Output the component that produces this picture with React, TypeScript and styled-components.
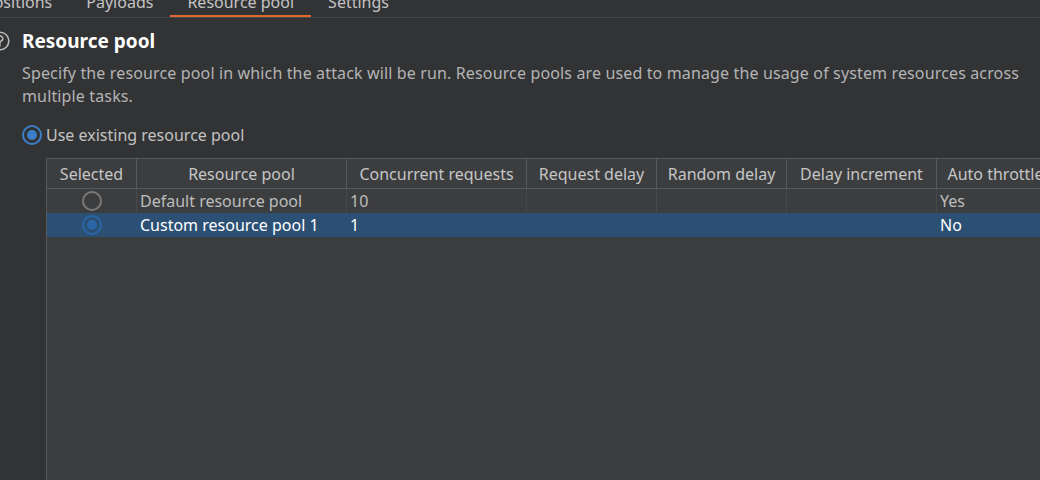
import React from "react";
import styled, { createGlobalStyle } from "styled-components";

const GlobalStyle = createGlobalStyle`
  html, body {
    margin: 0;
    padding: 0;
    background: #323335;
    overflow: hidden;
  }
  body {
    font-family: "Noto Sans", "Open Sans", Arial, sans-serif;
    color: #bdbdbd;
  }
`;

const Page = styled.div`
  width: 1040px;
  height: 480px;
  overflow: hidden;
  display: flex;
  flex-direction: column;
`;

const TabBar = styled.div`
  display: flex;
  height: 29px;
  margin-top: -12px;
  margin-left: -33px;
  border-bottom: 1px solid #47484a;
  flex-shrink: 0;
`;

const Tab = styled.div<{ $active?: boolean }>`
  display: flex;
  align-items: center;
  padding: 0 17px;
  font-size: 16px;
  color: #c4c4c4;
  border-bottom: 2px solid ${(p) => (p.$active ? "#e2672f" : "transparent")};
  white-space: nowrap;
`;

const Content = styled.div`
  display: flex;
  flex-direction: column;
  flex: 1;
  min-height: 0;
  padding: 9px 0 0 22px;
`;

const HeadingRow = styled.div`
  display: flex;
  align-items: center;
  height: 28px;
  position: relative;
`;

const HelpIcon = styled.svg`
  position: absolute;
  left: -32px;
  top: 4px;
`;

const Heading = styled.h1`
  margin: 0;
  font-size: 19px;
  font-weight: 700;
  color: #ffffff;
  line-height: 28px;
`;

const Description = styled.p`
  margin: 7px 0 0;
  font-size: 16px;
  line-height: 23px;
  letter-spacing: 0.14px;
  color: #b4b4b4;
  padding-right: 12px;
`;

const RadioRow = styled.label`
  display: flex;
  align-items: center;
  gap: 4px;
  height: 24px;
  margin-top: 15px;
  font-size: 16px;
  color: #c2c2c2;
`;

const Radio = styled.span<{ $checked?: boolean; $onSelection?: boolean }>`
  box-sizing: border-box;
  width: 20px;
  height: 20px;
  border-radius: 50%;
  border: 2px solid
    ${(p) => (p.$checked ? (p.$onSelection ? "#2a66a6" : "#3b7fc9") : "#7a7a7a")};
  display: inline-flex;
  align-items: center;
  justify-content: center;
  flex-shrink: 0;
  &::after {
    content: "";
    width: 10px;
    height: 10px;
    border-radius: 50%;
    background: ${(p) => (p.$onSelection ? "#2a66a6" : "#3b7fc9")};
    display: ${(p) => (p.$checked ? "block" : "none")};
  }
`;

const Table = styled.div`
  margin-top: 11px;
  margin-left: 24px;
  flex: 1;
  background: #3c3d3f;
  border-top: 1px solid #58595b;
  border-left: 1px solid #58595b;
  display: flex;
  flex-direction: column;
`;

const columns = "90px 210px 180px 130px 130px 150px 118px";

const HeaderRow = styled.div`
  display: grid;
  grid-template-columns: ${columns};
  height: 29px;
  border-bottom: 1px solid #58595b;
`;

const HeaderCell = styled.div`
  box-sizing: border-box;
  border-right: 1px solid #58595b;
  display: flex;
  align-items: center;
  justify-content: center;
  font-size: 16px;
  color: #c6c6c6;
  white-space: nowrap;
`;

const Row = styled.div<{ $selected?: boolean }>`
  display: grid;
  grid-template-columns: ${columns};
  height: 24px;
  background: ${(p) => (p.$selected ? "#2c5074" : "transparent")};
  color: ${(p) => (p.$selected ? "#ffffff" : "#bdbdbd")};
`;

const Cell = styled.div<{ $center?: boolean; $selected?: boolean }>`
  box-sizing: border-box;
  border-right: 1px solid ${(p) => (p.$selected ? "transparent" : "#47484a")};
  display: flex;
  align-items: center;
  justify-content: ${(p) => (p.$center ? "center" : "flex-start")};
  padding-left: ${(p) => (p.$center ? "0" : "3px")};
  font-size: 16px;
  white-space: nowrap;
`;

const headers = [
  "Selected",
  "Resource pool",
  "Concurrent requests",
  "Request delay",
  "Random delay",
  "Delay increment",
  "Auto throttle",
];

const pools = [
  { name: "Default resource pool", concurrent: "10", auto: "Yes", selected: false },
  { name: "Custom resource pool 1", concurrent: "1", auto: "No", selected: true },
];

export default function App() {
  return (
    <Page>
      <GlobalStyle />
      <TabBar>
        <Tab>Positions</Tab>
        <Tab>Payloads</Tab>
        <Tab $active>Resource pool</Tab>
        <Tab>Settings</Tab>
      </TabBar>
      <Content>
        <HeadingRow>
          <HelpIcon width="20" height="20" viewBox="0 0 20 20">
            <circle cx="10" cy="10" r="8.8" fill="none" stroke="#b8b8b8" strokeWidth="1.6" />
            <path
              d="M7.3 7.6a2.7 2.7 0 1 1 3.8 2.5c-.8.4-1.1.9-1.1 1.7v.6"
              fill="none"
              stroke="#b8b8b8"
              strokeWidth="1.6"
              strokeLinecap="round"
            />
            <circle cx="10" cy="14.6" r="1" fill="#b8b8b8" />
          </HelpIcon>
          <Heading>Resource pool</Heading>
        </HeadingRow>
        <Description>
          Specify the resource pool in which the attack will be run. Resource pools are used to
          manage the usage of system resources across multiple tasks.
        </Description>
        <RadioRow>
          <Radio $checked />
          Use existing resource pool
        </RadioRow>
        <Table>
          <HeaderRow>
            {headers.map((h) => (
              <HeaderCell key={h}>{h}</HeaderCell>
            ))}
          </HeaderRow>
          {pools.map((p) => (
            <Row key={p.name} $selected={p.selected}>
              <Cell $center $selected={p.selected}>
                <Radio $checked={p.selected} $onSelection={p.selected} />
              </Cell>
              <Cell $selected={p.selected}>{p.name}</Cell>
              <Cell $selected={p.selected}>{p.concurrent}</Cell>
              <Cell $selected={p.selected} />
              <Cell $selected={p.selected} />
              <Cell $selected={p.selected} />
              <Cell $selected={p.selected}>{p.auto}</Cell>
            </Row>
          ))}
        </Table>
      </Content>
    </Page>
  );
}
